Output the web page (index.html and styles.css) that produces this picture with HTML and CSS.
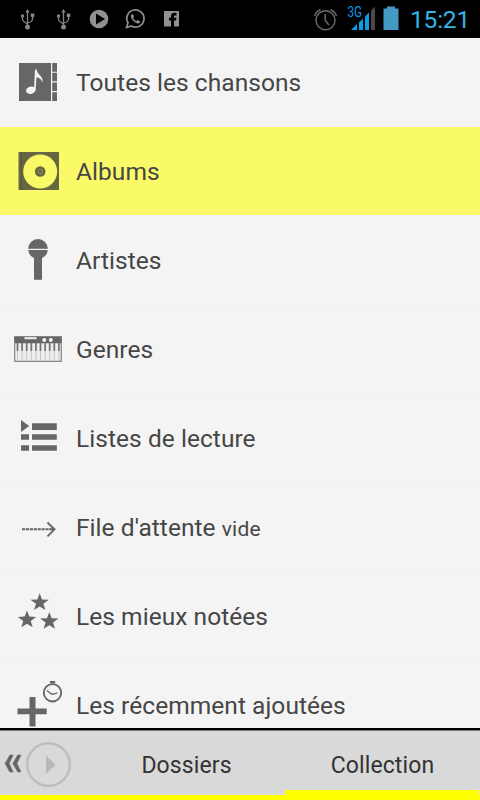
FILE: index.html
```html
<!DOCTYPE html>
<html lang="fr">

<head>
    <meta charset="UTF-8">
    <meta name="viewport" content="width=device-width, initial-scale=1.0">
    <title>Collection</title>
    <link rel="stylesheet" href="styles.css">
</head>

<body>
    <header class="status">
        <svg class="status-left" width="200" height="38" viewBox="0 0 200 38">
            <defs>
                <g id="usb" fill="none" stroke="#858585" stroke-width="1.3">
                    <path d="M0 -7V8M-5 -3V0Q-5 2 -3 3L0 5M5 -3V0Q5 2 3 3L0 4" />
                    <path d="M0 -10L-2.2 -6.5H2.2Z" fill="#858585" stroke="none" />
                    <circle cx="0" cy="8" r="2.5" fill="#858585" stroke="none" />
                    <circle cx="-5" cy="-3" r="1.7" fill="#858585" stroke="none" />
                    <path d="M3.2 -5.5h3.6v3.4H3.2z" fill="#858585" stroke="none" />
                </g>
            </defs>
            <use href="#usb" x="27.5" y="19" />
            <use href="#usb" x="63.5" y="19" />
            <circle cx="99" cy="19" r="9.3" fill="#918f90" />
            <path d="M96 13.5V24.5L105 19Z" fill="#000" />
            <path d="M126.5 27.5L128 22.8A8.6 8.6 0 1 1 131.3 26Z" fill="none" stroke="#918f90" stroke-width="1.7" />
            <path d="M132 14.2C130.5 14.8 130.5 17 132 19.2C134 22 136.5 23.5 138.5 23.4Q140.3 23 140 21.2L137.6 20L136.3 21.2Q134 20.2 133 17.8L134 16.8L133.2 14.2Z" fill="#918f90" />
            <path d="M164 11h15v15.5h-15z" fill="#918f90" />
            <path d="M171 27V20.5H169V17.8H171V16Q171 12.8 174.2 12.8H176.5V15.5H175Q174 15.5 174 16.5V17.8H176.5L176 20.5H174V27Z" fill="#000" />
        </svg>
        <div class="status-right">
            <svg width="90" height="38" viewBox="312 0 90 38">
                <g fill="none" stroke="#686868" stroke-width="1.5">
                    <circle cx="325.5" cy="20.3" r="9.5" />
                    <path d="M325.3 14V20.5L329 25M314.5 16Q316 11.5 320.5 9.8M336.5 16Q335 11.5 330.5 9.8" />
                </g>
                <text class="network" x="347.5" y="17" textLength="14.5" lengthAdjust="spacingAndGlyphs">3G</text>
                <path d="M351 30L357 24V30ZM359 30V22.5L363 18.5V30ZM365 30V16.5L369 12.5V30Z" fill="#0a9de8" />
                <path d="M371 30V10.5L375 6.5V30Z" fill="#4b4749" />
                <path d="M383.5 8.5H387V6.5H395V8.5H398.5V30H383.5Z" fill="#439bc4" />
            </svg>
            <span class="clock">15:21</span>
        </div>
    </header>

    <main class="list">
        <div class="row">
            <svg class="icon" viewBox="0 0 76 89">
                <path d="M19 25h32v38H19zM52.2 25h4.8v8.7h-4.8zM52.2 34.8h4.8v8.5h-4.8zM52.2 44.5h4.8v8.5h-4.8zM52.2 54.2h4.8V63h-4.8z" />
                <g fill="#f4f4f4">
                    <ellipse cx="30.8" cy="52.2" rx="4.8" ry="3.7" transform="rotate(-15 30.8 52.2)" />
                    <path d="M35 31.5H36.5C37 37 44 38 42.3 44.5C41.5 41 39 39.5 36.5 39.2L35.6 52H34Z" />
                </g>
            </svg>
            <span>Toutes les chansons</span>
        </div>
        <div class="row selected">
            <svg class="icon" viewBox="0 0 76 89">
                <path d="M18.5 25H59v38H18.5z" />
                <path d="M21.5 25v38" stroke="#56563a" stroke-width="1" />
                <circle cx="40.2" cy="44.5" r="17" fill="#fafa68" />
                <circle cx="40.2" cy="44.5" r="5.3" />
                <circle cx="40.2" cy="44.5" r="2.3" fill="none" stroke="#9b9b4e" stroke-width=".8" />
            </svg>
            <span>Albums</span>
        </div>
        <div class="row">
            <svg class="icon" viewBox="0 0 76 89">
                <circle cx="38" cy="33" r="9.9" />
                <path d="M34 41h8v22.8h-8z" />
                <path d="M28 33.4H48" stroke="#f4f4f4" stroke-width="1.2" />
            </svg>
            <span>Artistes</span>
        </div>
        <div class="row">
            <svg class="icon" viewBox="0 0 76 89">
                <path d="M14.7 31.7h46.6v24.6H14.7z" fill="#eee" stroke="#858585" stroke-width="1.2" />
                <path d="M14.5 32h47v6.3h-47z" />
                <path d="M24.5 32.2h12v2h-12z" fill="#f4f4f4" />
                <circle cx="44.3" cy="35" r="2" fill="#f4f4f4" />
                <circle cx="50.8" cy="35" r="2" fill="#f4f4f4" />
                <path d="M17.5 38v8M22.1 38v8M26.7 38v8M31.3 38v8M35.9 38v8M40.5 38v8M45.1 38v8M49.7 38v8M54.3 38v8M58.9 38v8" stroke="#777" stroke-width="1.8" />
                <path d="M17.5 46v10M22.1 46v10M26.7 46v10M31.3 46v10M35.9 46v10M40.5 46v10M45.1 46v10M49.7 46v10M54.3 46v10M58.9 46v10" stroke="#bbb" stroke-width=".8" />
            </svg>
            <span>Genres</span>
        </div>
        <div class="row">
            <svg class="icon" viewBox="0 0 76 89">
                <path d="M21 26L29.2 32L21 38ZM32 29.3h24.8v6.7H32zM21 40.2h8v5.6h-8zM32 40.2h24.8v5.6H32zM21 51.2h8v5.6h-8zM32 51.2h24.8v5.6H32z" />
            </svg>
            <span>Listes de lecture</span>
        </div>
        <div class="row">
            <svg class="icon" viewBox="0 0 76 89">
                <path d="M22 46.3H51" fill="none" stroke="#666" stroke-width="2" stroke-dasharray="3.2 .7" />
                <path d="M50 46.3H54M47.5 39.5L54.5 46.3L47.5 53.3" fill="none" stroke="#666" stroke-width="1.9" />
            </svg>
            <span>File d'attente <small>vide</small></span>
        </div>
        <div class="row">
            <svg class="icon" viewBox="0 0 76 89">
                <defs>
                    <path id="star" d="M0 -9.3L2.3 -3.1L9.2 -2.7L3.7 1.3L5.7 7.5L0 4L-5.7 7.5L-3.7 1.3L-9.2 -2.7L-2.3 -3.1Z" />
                </defs>
                <use href="#star" x="39.7" y="30.5" />
                <use href="#star" x="27" y="47.7" />
                <use href="#star" x="49.3" y="49.3" />
            </svg>
            <span>Les mieux notées</span>
        </div>
        <div class="row">
            <svg class="icon" viewBox="0 0 76 89">
                <path d="M17.5 47.5h12V36h6v11.5h11.2v5.7H35.5v12.3h-6V53.2h-12zM50 20h5.2v2.5H50z" />
                <circle cx="52.5" cy="31.8" r="8.7" fill="none" stroke="#666" stroke-width="1.9" />
                <path d="M46.8 29.5L51.5 33Q54 33.3 57.3 31.8" fill="none" stroke="#666" stroke-width="1.4" />
            </svg>
            <span>Les récemment ajoutées</span>
        </div>
    </main>

    <footer class="bar">
        <svg class="player" width="90" height="64" viewBox="0 731 90 64">
            <path d="M9.8 755H13.2L9.2 763.5L13.2 772H9.8L5 763.5ZM17.7 755H21L17 763.5L21 772H17.7L12.8 763.5Z" fill="#666" stroke="#666" stroke-width=".5" />
            <circle cx="48.5" cy="764.5" r="21.3" fill="none" stroke="#bdbdbd" stroke-width="2.4" />
            <path d="M46 755.5V774L55.5 764.8Z" fill="#b8b8b8" />
        </svg>
        <div class="tab">Dossiers</div>
        <div class="tab active">Collection</div>
    </footer>
</body>

</html>
```
FILE: styles.css
```css
* {
    box-sizing: border-box;
}

body {
    display: flex;
    flex-direction: column;
    width: 480px;
    height: 800px;
    margin: 0;
    overflow: hidden;
    background-color: #f4f4f4;
    color: #464646;
    font-family: Roboto, sans-serif;
}

.status {
    display: flex;
    flex: none;
    justify-content: space-between;
    height: 38px;
    background-color: #000;
}

.status-right {
    display: flex;
    width: 168px;
}

.network {
    fill: #0a9de8;
    font-size: 14px;
}

.clock {
    padding-left: 8px;
    color: #33b5e5;
    font-size: 24.5px;
    line-height: 39px;
    letter-spacing: -0.2px;
}

.list {
    flex: 1;
    min-height: 0;
    overflow: hidden;
}

.row {
    display: flex;
    align-items: center;
    height: 89px;
    border-bottom: 1px solid #f2f2f2;
    font-size: 24.5px;
    letter-spacing: 0.05px;
    white-space: nowrap;
}

.row small {
    font-size: 21px;
    letter-spacing: 0.2px;
}

.icon {
    flex: none;
    width: 76px;
    height: 89px;
    fill: #666;
}

.selected {
    background-color: #fafa68;
    background-clip: padding-box;
}

.selected .icon {
    fill: #666642;
}

.bar {
    display: flex;
    flex: none;
    height: 72px;
    border-top: 2px solid #000;
    border-bottom: 5px solid #ff0;
    background-color: #d9d9d9;
    box-shadow: inset 0 1px #777;
}

.player {
    flex: none;
    margin-top: 1px;
}

.tab {
    flex: none;
    width: 195px;
    padding-right: 2px;
    color: #333;
    font-size: 23px;
    line-height: 72px;
    letter-spacing: 0.1px;
    text-align: center;
}

.active {
    width: 194px;
    padding: 0 0 0 1px;
    border-bottom: 5px solid #ff0;
}
```
